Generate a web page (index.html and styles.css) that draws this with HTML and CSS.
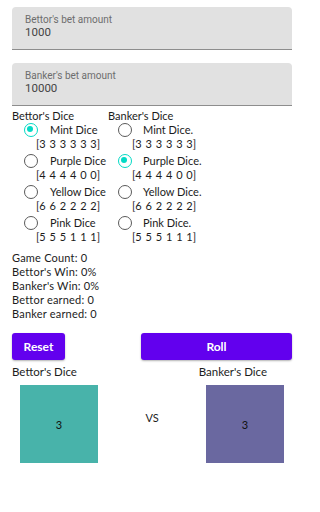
FILE: index.html
```html
<!DOCTYPE html>
<html>
<head>
<meta charset="utf-8">
<link rel="stylesheet" href="styles.css">
</head>
<body>
<div class="page">
  <div class="field">
    <div class="field-label">Bettor's bet amount</div>
    <div class="field-value">1000</div>
  </div>
  <div class="field">
    <div class="field-label">Banker's bet amount</div>
    <div class="field-value">10000</div>
  </div>

  <div class="dice-select">
    <div class="col col-bettor">
      <div class="col-title">Bettor's Dice</div>
      <div class="opt"><div class="opt-line"><span class="radio checked"></span><span class="opt-name">Mint Dice</span></div><div class="opt-faces">[3 3 3 3 3 3]</div></div>
      <div class="opt"><div class="opt-line"><span class="radio"></span><span class="opt-name">Purple Dice</span></div><div class="opt-faces">[4 4 4 4 0 0]</div></div>
      <div class="opt"><div class="opt-line"><span class="radio"></span><span class="opt-name">Yellow Dice</span></div><div class="opt-faces">[6 6 2 2 2 2]</div></div>
      <div class="opt"><div class="opt-line"><span class="radio"></span><span class="opt-name">Pink Dice</span></div><div class="opt-faces">[5 5 5 1 1 1]</div></div>
    </div>
    <div class="col col-banker">
      <div class="col-title">Banker's Dice</div>
      <div class="opt"><div class="opt-line"><span class="radio"></span><span class="opt-name">Mint Dice.</span></div><div class="opt-faces">[3 3 3 3 3 3]</div></div>
      <div class="opt"><div class="opt-line"><span class="radio checked"></span><span class="opt-name">Purple Dice.</span></div><div class="opt-faces">[4 4 4 4 0 0]</div></div>
      <div class="opt"><div class="opt-line"><span class="radio"></span><span class="opt-name">Yellow Dice.</span></div><div class="opt-faces">[6 6 2 2 2 2]</div></div>
      <div class="opt"><div class="opt-line"><span class="radio"></span><span class="opt-name">Pink Dice.</span></div><div class="opt-faces">[5 5 5 1 1 1]</div></div>
    </div>
  </div>

  <div class="stats">
    <div>Game Count: 0</div>
    <div>Bettor's Win: 0%</div>
    <div>Banker's Win: 0%</div>
    <div>Bettor earned: 0</div>
    <div>Banker earned: 0</div>
  </div>

  <div class="actions">
    <button class="btn btn-reset">Reset</button>
    <button class="btn btn-roll">Roll</button>
  </div>

  <div class="dice-labels">
    <span>Bettor's Dice</span>
    <span class="banker-label">Banker's Dice</span>
  </div>

  <div class="board">
    <div class="die die-mint">3</div>
    <div class="vs">VS</div>
    <div class="die die-purple">3</div>
  </div>
</div>
</body>
</html>
```

FILE: styles.css
```css
html, body {
  margin: 0;
  padding: 0;
  background: #ffffff;
  overflow: hidden;
}

body {
  font-family: Lato, "Noto Sans", sans-serif;
  font-size: 11px;
  color: #1c1c1c;
}

.page {
  width: 305px;
  box-sizing: border-box;
  padding: 7px 13px 0 12px;
}

.field {
  background: #e1e1e1;
  border-bottom: 1px solid #8d8d8d;
  border-radius: 4px 4px 0 0;
  padding: 7px 0 0 13px;
  box-sizing: border-box;
  height: 43px;
  margin-bottom: 13px;
  font-family: Roboto, "Liberation Sans", sans-serif;
}

.field-label {
  font-size: 10px;
  line-height: 11px;
  color: #6d6d6d;
}

.field-value {
  font-size: 11.5px;
  line-height: 14px;
  color: #444444;
}

.dice-select {
  display: grid;
  grid-template-columns: 96px 1fr;
  margin-top: -10px;
}

.col-title {
  line-height: 13px;
  height: 13px;
}

.opt {
  height: 31px;
}

.col-bettor .opt {
  padding-left: 12px;
}

.col-banker .opt {
  padding-left: 10px;
}

.opt-line {
  display: flex;
  align-items: center;
  height: 16px;
}

.radio {
  width: 14px;
  height: 14px;
  box-sizing: border-box;
  border: 1.6px solid #5a5a5a;
  border-radius: 50%;
  flex: none;
  position: relative;
}

.radio.checked {
  border-color: #03dac5;
}

.radio.checked::after {
  content: "";
  position: absolute;
  left: 2.4px;
  top: 2.4px;
  width: 6px;
  height: 6px;
  border-radius: 50%;
  background: #03dac5;
}

.opt-name {
  margin-left: 12px;
  line-height: 16px;
}

.col-banker .opt-name {
  margin-left: 11px;
}

.opt-faces {
  line-height: 12px;
  padding-left: 12px;
  word-spacing: 1px;
}

.col-banker .opt-faces {
  padding-left: 14px;
}

.stats {
  margin-top: 5px;
  line-height: 14px;
  letter-spacing: 0.2px;
}

.actions {
  display: flex;
  justify-content: space-between;
  margin-top: 12px;
}

.btn {
  height: 27px;
  border: none;
  border-radius: 3px;
  background: #6200ee;
  color: #ffffff;
  font-family: Lato, "Noto Sans", sans-serif;
  font-weight: 700;
  font-size: 12px;
  box-shadow: 0 1px 2px rgba(0, 0, 0, 0.3);
  padding: 0;
}

.btn-reset {
  width: 53px;
}

.btn-roll {
  width: 151px;
}

.dice-labels {
  display: flex;
  justify-content: space-between;
  line-height: 14px;
  margin-top: 5px;
  font-size: 11.5px;
}

.banker-label {
  margin-right: 25px;
}

.board {
  display: flex;
  justify-content: space-between;
  align-items: center;
  padding: 0 8px;
  margin-top: 6px;
}

.die {
  width: 78px;
  height: 78px;
  display: flex;
  align-items: center;
  justify-content: center;
  font-size: 11px;
  color: #111;
}

.die-mint {
  background: #48b3aa;
}

.die-purple {
  background: #6a68a0;
}

.vs {
  font-size: 11px;
  margin-bottom: 14px;
}
```
